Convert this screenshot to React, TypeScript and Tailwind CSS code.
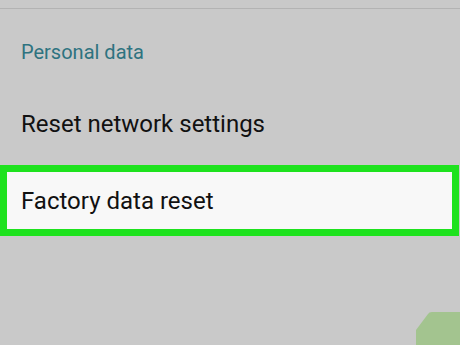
import React from 'react';

export default function App() {
  return (
    <div
      className="relative w-[460px] h-[345px] overflow-hidden bg-[#c9c9c9]"
      style={{ fontFamily: 'Roboto, "Liberation Sans", sans-serif' }}
    >
      <div className="h-[8px]" />
      <div className="h-px bg-[#b3b3b3]" />
      <div className="pl-[21px] pt-[29px] h-[100px] text-[20px] leading-[28px] text-[#2e7380]">Personal data</div>
      <div className="pl-[21px] h-[56px] text-[24px] leading-[30px] text-[#111]">Reset network settings</div>
      <div className="w-[459px] border-[7px] border-[#1ee21e] bg-[#f8f8f8] h-[71px] flex items-center pl-[14px] text-[24px] text-[#111]">
        Factory data reset
      </div>
      <svg className="absolute right-0 bottom-0" width="44" height="33" viewBox="0 0 44 33">
        <path d="M0 33 L0 18 L12 2 Q13 0 16 0 L44 0 L44 33 Z" fill="#a3c48f" />
      </svg>
    </div>
  );
}
